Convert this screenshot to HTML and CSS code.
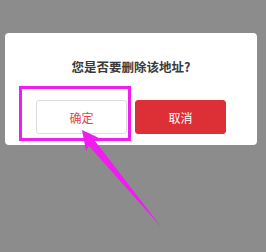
FILE: index.html
```html
<!DOCTYPE html>
<html>
	<head>
		<title>删除地址</title>
		<link rel="stylesheet" href="styles.css">
	</head>
	<body>
		<div class="mask">
			<div class="dialog">
				<p class="dialogTitle">您是否要删除该地址?</p>
				<div class="dialogButtons">
					<button class="btn btnConfirm">确定</button>
					<button class="btn btnCancel">取消</button>
				</div>
			</div>
		</div>

		<!-- annotation: highlight box and arrow -->
		<div class="markBox"></div>
		<svg class="markArrow" width="266" height="252" viewBox="0 0 266 252">
			<polygon points="82,130 99,138 95,141 162,228 89,146 86,151" fill="#f01cf0"/>
		</svg>
	</body>
</html>
```

FILE: styles.css
```css
html, body {
	margin: 0;
	padding: 0;
}

body {
	width: 266px;
	height: 252px;
	background-color: #8c8c8c;
	font-family: "Noto Sans CJK SC", "Noto Sans", sans-serif;
	position: relative;
	overflow: hidden;
}

.mask {
	padding: 33px 9px 0 5px;
}

.dialog {
	width: 252px;
	height: 112px;
	background-color: #fff;
	border-radius: 4px;
	box-sizing: border-box;
	padding-top: 24px;
}

.dialogTitle {
	margin: 0;
	text-align: center;
	font-size: 12.5px;
	line-height: 20px;
	font-weight: 700;
	color: #3a3a3a;
}

.dialogButtons {
	display: flex;
	justify-content: center;
	gap: 8px;
	margin-top: 23px;
}

.btn {
	width: 91px;
	height: 34px;
	border-radius: 3px;
	font-family: inherit;
	font-size: 12px;
	padding: 0;
	box-sizing: border-box;
}

.btnConfirm {
	background-color: #fff;
	border: 1px solid #dcdcdc;
	color: #e0474c;
}

.btnCancel {
	background-color: #dc2f36;
	border: 1px solid #dc2f36;
	color: #fff;
}

.markBox {
	position: absolute;
	left: 19px;
	top: 86px;
	width: 112px;
	height: 55px;
	box-sizing: border-box;
	border: 3px solid #f01cf0;
}

.markArrow {
	position: absolute;
	left: 0;
	top: 0;
}
```
